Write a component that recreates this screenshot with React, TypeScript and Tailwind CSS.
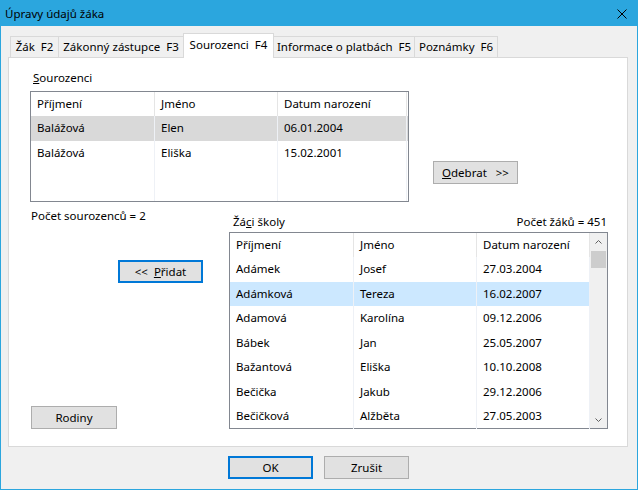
import type { ReactNode } from 'react'

interface Column {
  label: string
  width: string
}

interface ListProps {
  columns:   Column[]
  rows:      string[][]
  selected:  number
  selClass:  string
  boxClass:  string
  scroll?:   boolean
}

const upperCols: Column[] = [
  { label: 'Příjmení', width: 'w-[124px]' },
  { label: 'Jméno', width: 'w-[123px]' },
  { label: 'Datum narození', width: 'w-[129px]' },
]

const lowerCols: Column[] = [
  { label: 'Příjmení', width: 'w-[124px]' },
  { label: 'Jméno', width: 'w-[123px]' },
  { label: 'Datum narození', width: 'w-[113px]' },
]

const siblings = [
  ['Balážová', 'Elen', '06.01.2004'],
  ['Balážová', 'Eliška', '15.02.2001'],
]

const pupils = [
  ['Adámek', 'Josef', '27.03.2004'],
  ['Adámková', 'Tereza', '16.02.2007'],
  ['Adamová', 'Karolína', '09.12.2006'],
  ['Bábek', 'Jan', '25.05.2007'],
  ['Bažantová', 'Eliška', '10.10.2008'],
  ['Bečička', 'Jakub', '29.12.2006'],
  ['Bečičková', 'Alžběta', '27.05.2003'],
]

function Chevron({ down }: { down?: boolean }) {
  return (
    <svg width="7" height="4" viewBox="0 0 7 4" className={down ? 'rotate-180' : ''}>
      <polyline points="0.5,3.5 3.5,0.5 6.5,3.5" fill="none" stroke="#606060" strokeWidth="1" />
    </svg>
  )
}

function ListView({ columns, rows, selected, selClass, boxClass, scroll }: ListProps) {
  return (
    <div className={`border border-[#828790] bg-white flex ${boxClass}`}>
      <div className="flex flex-col flex-1 min-w-0">
        <div className="flex h-[24px] shrink-0">
          {columns.map((c) => (
            <div key={c.label} className={`${c.width} shrink-0 pl-[6px] flex items-center border-r border-[#e5e5e5]`}>
              {c.label}
            </div>
          ))}
        </div>
        {rows.map((r, i) => (
          <div key={i} className={`flex h-[24.5px] shrink-0 ${i === selected ? selClass : ''}`}>
            {r.map((cell, j) => (
              <div key={j} className={`${columns[j].width} shrink-0 pl-[6px] flex items-center border-r border-[#eef1f6]`}>
                {cell}
              </div>
            ))}
          </div>
        ))}
        <div className="flex flex-1">
          {columns.map((c) => (
            <div key={c.label} className={`${c.width} shrink-0 border-r border-[#eef1f6]`} />
          ))}
        </div>
      </div>
      {scroll && (
        <div className="w-[17px] shrink-0 bg-[#f0f0f0] flex flex-col items-center">
          <div className="h-[17px] flex items-center justify-center">
            <Chevron />
          </div>
          <div className="w-[15px] h-[17px] mt-[1px] bg-[#cdcdcd]" />
          <div className="flex-1" />
          <div className="h-[17px] flex items-center justify-center">
            <Chevron down />
          </div>
        </div>
      )}
    </div>
  )
}

function Btn({ children, focused, className = '' }: { children: ReactNode; focused?: boolean; className?: string }) {
  return (
    <div
      className={`h-[23px] w-[85px] shrink-0 bg-[#e1e1e1] flex items-center justify-center whitespace-pre ${
        focused ? 'border-2 border-[#0078d7]' : 'border border-[#adadad]'
      } ${className}`}
    >
      {children}
    </div>
  )
}

function Tab({ label, width, active }: { label: string; width: string; active?: boolean }) {
  if (active) {
    return (
      <div className={`${width} h-[25px] -mb-px -ml-px relative z-10 bg-white border-t border-l border-r border-[#d9d9d9] flex items-center justify-center pb-[3px] whitespace-pre`}>
        {label}
      </div>
    )
  }
  return (
    <div className={`${width} h-[21px] -ml-px bg-[#f0f0f0] border-t border-l border-r border-[#d9d9d9] flex items-center justify-center whitespace-pre`}>
      {label}
    </div>
  )
}

export default function App() {
  return (
    <div className="w-[638px] h-[490px] border border-[#2ba6de] bg-[#f0f0f0] text-[11.5px] leading-[16px] text-black font-['Noto_Sans',sans-serif] flex flex-col overflow-hidden">
      <div className="h-[25px] shrink-0 bg-[#2ba6de] flex items-center justify-between pl-[4px] pr-[10px]">
        <span>Úpravy údajů žáka</span>
        <svg width="10" height="10" viewBox="0 0 10 10">
          <path d="M0.5 0.5 L9.5 9.5 M9.5 0.5 L0.5 9.5" stroke="#000" strokeWidth="1" fill="none" />
        </svg>
      </div>

      <div className="pl-[7px] pt-[7px]">
        <div className="flex items-end h-[24px] pl-[3px]">
          <Tab label="Žák  F2" width="w-[49px]" />
          <Tab label="Zákonný zástupce  F3" width="w-[126px]" />
          <Tab label="Sourozenci  F4" width="w-[91px]" active />
          <Tab label="Informace o platbách  F5" width="w-[142px]" />
          <Tab label="Poznámky  F6" width="w-[84px]" />
        </div>

        <div className="w-[620px] h-[390px] bg-white border border-[#d9d9d9] pt-[12px] pl-[21px]">
          <div className="flex">
            <div className="w-[379px]">
              <div className="h-[16px] pl-[3px]">
                <u>S</u>ourozenci
              </div>
              <ListView
                columns={upperCols}
                rows={siblings}
                selected={0}
                selClass="bg-[#d9d9d9]"
                boxClass="mt-[5px] h-[111px]"
              />
            </div>
            <Btn className="ml-[24px] mt-[91px]">
              <span>
                <u>O</u>debrat   {'>>'}
              </span>
            </Btn>
          </div>

          <div className="flex">
            <div className="w-[199px] flex flex-col items-start">
              <div className="mt-[6px] pl-[1px] h-[16px]">Počet sourozenců = 2</div>
              <Btn focused className="mt-[36px] ml-[88px]">
                <span>
                  {'<<'}  <u>P</u>řidat
                </span>
              </Btn>
              <Btn className="mt-[123px] ml-[1px] w-[86px]">Rodiny</Btn>
            </div>
            <div className="w-[379px]">
              <div className="mt-[12px] h-[16px] flex justify-between pl-[4px] pr-[1px]">
                <span>
                  Žá<u>c</u>i školy
                </span>
                <span>Počet žáků = 451</span>
              </div>
              <ListView
                columns={lowerCols}
                rows={pupils}
                selected={1}
                selClass="bg-[#cce8ff]"
                boxClass="mt-[2px] h-[197px]"
                scroll
              />
            </div>
          </div>
        </div>

        <div className="flex mt-[9px] pl-[220px] gap-[11px]">
          <Btn focused>OK</Btn>
          <Btn>Zrušit</Btn>
        </div>
      </div>
    </div>
  )
}
